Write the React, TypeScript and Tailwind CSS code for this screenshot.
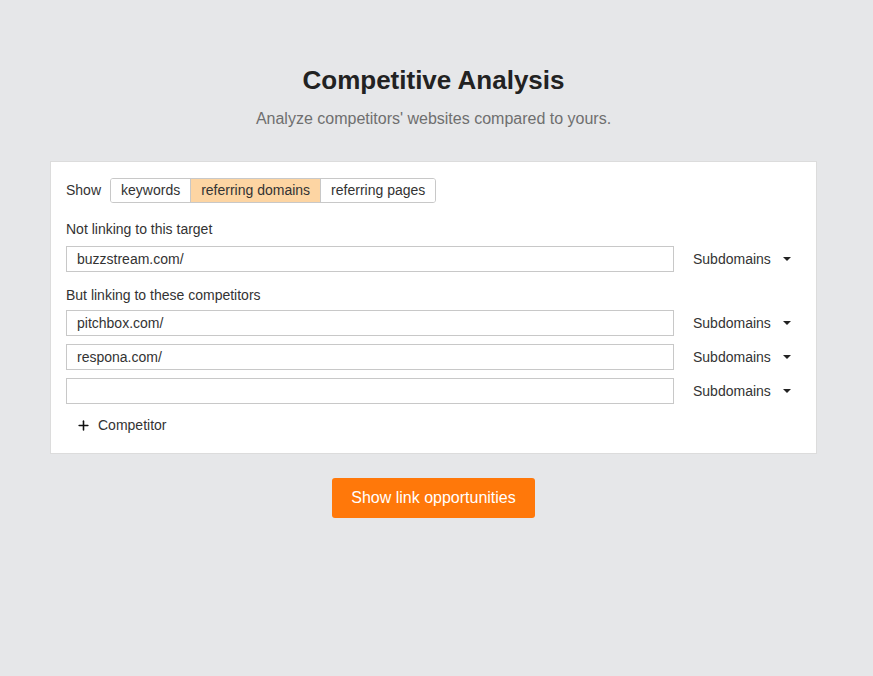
import { Plus } from "lucide-react";

const TABS = ["keywords", "referring domains", "referring pages"];

function DomainRow({ value }: { value: string }) {
  return (
    <div className="flex items-center">
      <input
        readOnly
        value={value}
        className="h-[26px] w-[608px] border border-[#c8c8c8] bg-white px-[10px] text-[14px] text-[#333] outline-none"
      />
      <div className="ml-[19px] flex w-[108px] items-center justify-between text-[14px] text-[#333]">
        <span>Subdomains</span>
        <svg width="8" height="4" viewBox="0 0 8 4" className="mr-[10px]">
          <path d="M0 0h8L4 4z" fill="#222" />
        </svg>
      </div>
    </div>
  );
}

export default function App() {
  const active = "referring domains";

  return (
    <div
      className="min-h-[676px] bg-[#e6e7e9] pr-[6px]"
      style={{ fontFamily: '"Liberation Sans", Arial, sans-serif' }}
    >
      <div className="flex flex-col items-center pt-[63px]">
        <h1 className="text-[26px] font-bold leading-[34px] text-[#222]">
          Competitive Analysis
        </h1>
        <p className="mt-[12px] text-[16px] leading-[20px] text-[#6f6f6f]">
          Analyze competitors' websites compared to yours.
        </p>

        <div className="mt-[32px] w-[767px] border border-[#dcdcdc] bg-white px-[15px] pt-[16px] pb-[18px]">
          <div className="flex items-center text-[14px] text-[#333]">
            <span className="mr-[9px]">Show</span>
            <div className="flex h-[25px] overflow-hidden rounded-[3px] border border-[#c8c8c8]">
              {TABS.map((t, i) => (
                <button
                  key={t}
                  className={`px-[10px] text-[14px] ${
                    i > 0 ? "border-l border-[#c8c8c8]" : ""
                  } ${t === active ? "bg-[#fdd5a3]" : "bg-white"}`}
                >
                  {t}
                </button>
              ))}
            </div>
          </div>

          <div className="mt-[16px] text-[14px] leading-[20px] text-[#333]">
            Not linking to this target
          </div>
          <div className="mt-[7px]">
            <DomainRow value="buzzstream.com/" />
          </div>

          <div className="mt-[13px] text-[14px] leading-[20px] text-[#333]">
            But linking to these competitors
          </div>
          <div className="mt-[5px] flex flex-col gap-[8px]">
            <DomainRow value="pitchbox.com/" />
            <DomainRow value="respona.com/" />
            <DomainRow value="" />
          </div>

          <button className="mt-[11px] flex items-center pl-[10px] text-[14px] leading-[20px] text-[#333]">
            <Plus size={15} strokeWidth={2.5} className="mr-[7px] text-[#111]" />
            Competitor
          </button>
        </div>

        <button className="mt-[24px] h-[40px] w-[203px] rounded-[3px] bg-[#ff780a] text-[16px] text-white">
          Show link opportunities
        </button>
      </div>
    </div>
  );
}
